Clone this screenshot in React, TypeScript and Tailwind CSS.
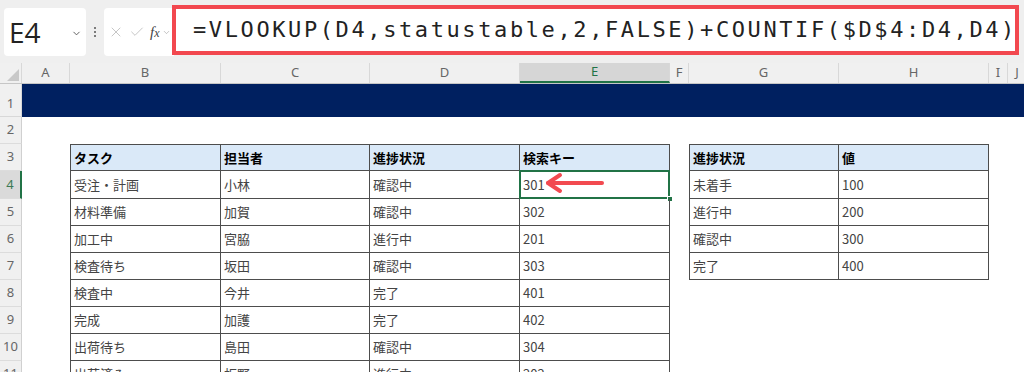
import { Check, ChevronDown, X } from 'lucide-react';

type Row = { n: number; h: number; left?: string[]; right?: string[]; head?: boolean };

const columns = [
  { key: 'A', w: 48 },
  { key: 'B', w: 151 },
  { key: 'C', w: 149 },
  { key: 'D', w: 150 },
  { key: 'E', w: 150 },
  { key: 'F', w: 19 },
  { key: 'G', w: 150 },
  { key: 'H', w: 150 },
  { key: 'I', w: 19 },
  { key: 'J', w: 19 },
];

const rows: Row[] = [
  { n: 2, h: 27 },
  { n: 3, h: 27, head: true, left: ['タスク', '担当者', '進捗状況', '検索キー'], right: ['進捗状況', '値'] },
  { n: 4, h: 28, left: ['受注・計画', '小林', '確認中', '301'], right: ['未着手', '100'] },
  { n: 5, h: 27, left: ['材料準備', '加賀', '確認中', '302'], right: ['進行中', '200'] },
  { n: 6, h: 27, left: ['加工中', '宮脇', '進行中', '201'], right: ['確認中', '300'] },
  { n: 7, h: 27, left: ['検査待ち', '坂田', '確認中', '303'], right: ['完了', '400'] },
  { n: 8, h: 27, left: ['検査中', '今井', '完了', '401'] },
  { n: 9, h: 27, left: ['完成', '加護', '完了', '402'] },
  { n: 10, h: 27, left: ['出荷待ち', '島田', '確認中', '304'] },
  { n: 11, h: 27, left: ['出荷済み', '板野', '進行中', '202'] },
];

const jp = "font-['Noto_Sans_CJK_JP','Noto_Sans',sans-serif]";

function TableCell({ text, w, first, head, selected }: { text: string; w: number; first?: boolean; head?: boolean; selected?: boolean }) {
  return (
    <div
      style={{ width: w }}
      className={[
        'relative flex h-full shrink-0 items-center border-r border-b border-[#4d4d4d] px-[3px] text-[13px]',
        first ? 'border-l' : '',
        head ? 'border-t bg-[#dae9f8] font-bold text-black' : 'text-[#444]',
      ].join(' ')}
    >
      <span className="whitespace-nowrap">{text}</span>
      {selected && (
        <>
          <div className="absolute -top-[1px] -left-[1px] -right-[1px] -bottom-[1px] border-2 border-[#217346]" />
          <div className="absolute -right-[4px] -bottom-[4px] h-[6px] w-[6px] border border-white bg-[#217346]" />
          <svg className="absolute left-[24px] top-[1px]" width="62" height="22" viewBox="0 0 62 22">
            <path d="M4 11 H58" stroke="#f24a50" strokeWidth="4" strokeLinecap="round" />
            <path d="M16 3 L4 11 L16 19" fill="none" stroke="#f24a50" strokeWidth="4" strokeLinecap="round" strokeLinejoin="round" />
          </svg>
        </>
      )}
    </div>
  );
}

function Blank({ w }: { w: number }) {
  return <div style={{ width: w }} className="h-full shrink-0" />;
}

export default function App() {
  return (
    <div className={`h-[372px] w-[1024px] overflow-hidden bg-white ${jp}`}>
      {/* formula bar */}
      <div className="flex h-[63px] items-start bg-[#efefef]">
        <div className="ml-[4px] mt-[8px] flex h-[48px] w-[82px] items-center justify-between rounded-[4px] bg-white pl-[5px] pr-[4px]">
          <span className="font-['Open_Sans',sans-serif] text-[28px] leading-none text-[#222]">E4</span>
          <ChevronDown size={11} strokeWidth={2} className="mt-[2px] text-[#555]" />
        </div>
        <div className="mt-[27px] flex w-[18px] flex-col items-center gap-[2px]">
          <span className="h-[2px] w-[2px] rounded-full bg-[#555]" />
          <span className="h-[2px] w-[2px] rounded-full bg-[#555]" />
          <span className="h-[2px] w-[2px] rounded-full bg-[#555]" />
        </div>
        <div className="mt-[8px] flex h-[48px] w-[70px] items-center gap-[5px] rounded-l-[4px] bg-white pl-[4px]">
          <X size={16} strokeWidth={1.3} className="text-[#bdbdbd]" />
          <Check size={16} strokeWidth={1.3} className="text-[#bdbdbd]" />
          <span className="font-['Liberation_Serif',serif] text-[15px] italic leading-none text-[#444]">
            f<span className="text-[12px]">x</span>
          </span>
          <ChevronDown size={9} strokeWidth={1.5} className="-ml-[3px] text-[#999]" />
        </div>
        <div className="mt-[5px] -ml-[2px] flex h-[50px] w-[847px] items-center border-4 border-[#f2484f] bg-white pl-[17px]">
          <span className="whitespace-nowrap font-['DejaVu_Sans_Mono',monospace] text-[22px] leading-none tracking-[2.6px] text-[#222]">
            =VLOOKUP(D4,statustable,2,FALSE)+COUNTIF($D$4:D4,D4)
          </span>
        </div>
      </div>

      {/* column headers */}
      <div className="flex h-[21px] border-b border-[#c6c6c6] bg-[#f0f0f0] font-['Noto_Sans',sans-serif] text-[13px] text-[#666]">
        <div className="relative h-full w-[22px] shrink-0 border-r border-[#d8d8d8]">
          <div className="absolute right-[2px] bottom-[2px] h-0 w-0 border-b-[12px] border-l-[12px] border-b-[#c8c8c8] border-l-transparent" />
        </div>
        {columns.map((c) => (
          <div
            key={c.key}
            style={{ width: c.w }}
            className={[
              'flex h-full shrink-0 items-center justify-center border-r border-[#d8d8d8]',
              c.key === 'E' ? 'border-b-2 border-b-[#217346] bg-[#d6d6d6] text-[#217346]' : '',
            ].join(' ')}
          >
            {c.key}
          </div>
        ))}
      </div>

      {/* row 1 */}
      <div className="flex h-[33px]">
        <div className="flex h-full w-[22px] shrink-0 items-end justify-center border-r border-b border-[#d8d8d8] bg-[#f0f0f0] pb-[3px] font-['Noto_Sans',sans-serif] text-[13px] text-[#666]">
          1
        </div>
        <div className="h-full flex-1 bg-[#002060]" />
      </div>

      {rows.map((r) => (
        <div key={r.n} style={{ height: r.h }} className="flex">
          <div
            className={[
              'flex h-full w-[22px] shrink-0 items-center justify-center border-b border-[#dcdcdc] font-[\'Noto_Sans\',sans-serif] text-[13px]',
              r.n === 4 ? 'border-r-2 border-r-[#217346] bg-[#dadada] text-[#3d7a55]' : 'border-r border-r-[#d0d0d0] bg-[#f0f0f0] text-[#666]',
            ].join(' ')}
          >
            {r.n}
          </div>
          <Blank w={48} />
          {r.left ? (
            r.left.map((t, i) => (
              <TableCell key={i} text={t} w={columns[i + 1].w} first={i === 0} head={r.head} selected={r.n === 4 && i === 3} />
            ))
          ) : (
            <Blank w={600} />
          )}
          <Blank w={19} />
          {r.right ? (
            r.right.map((t, i) => <TableCell key={i} text={t} w={150} first={i === 0} head={r.head} />)
          ) : (
            <Blank w={300} />
          )}
        </div>
      ))}
    </div>
  );
}
